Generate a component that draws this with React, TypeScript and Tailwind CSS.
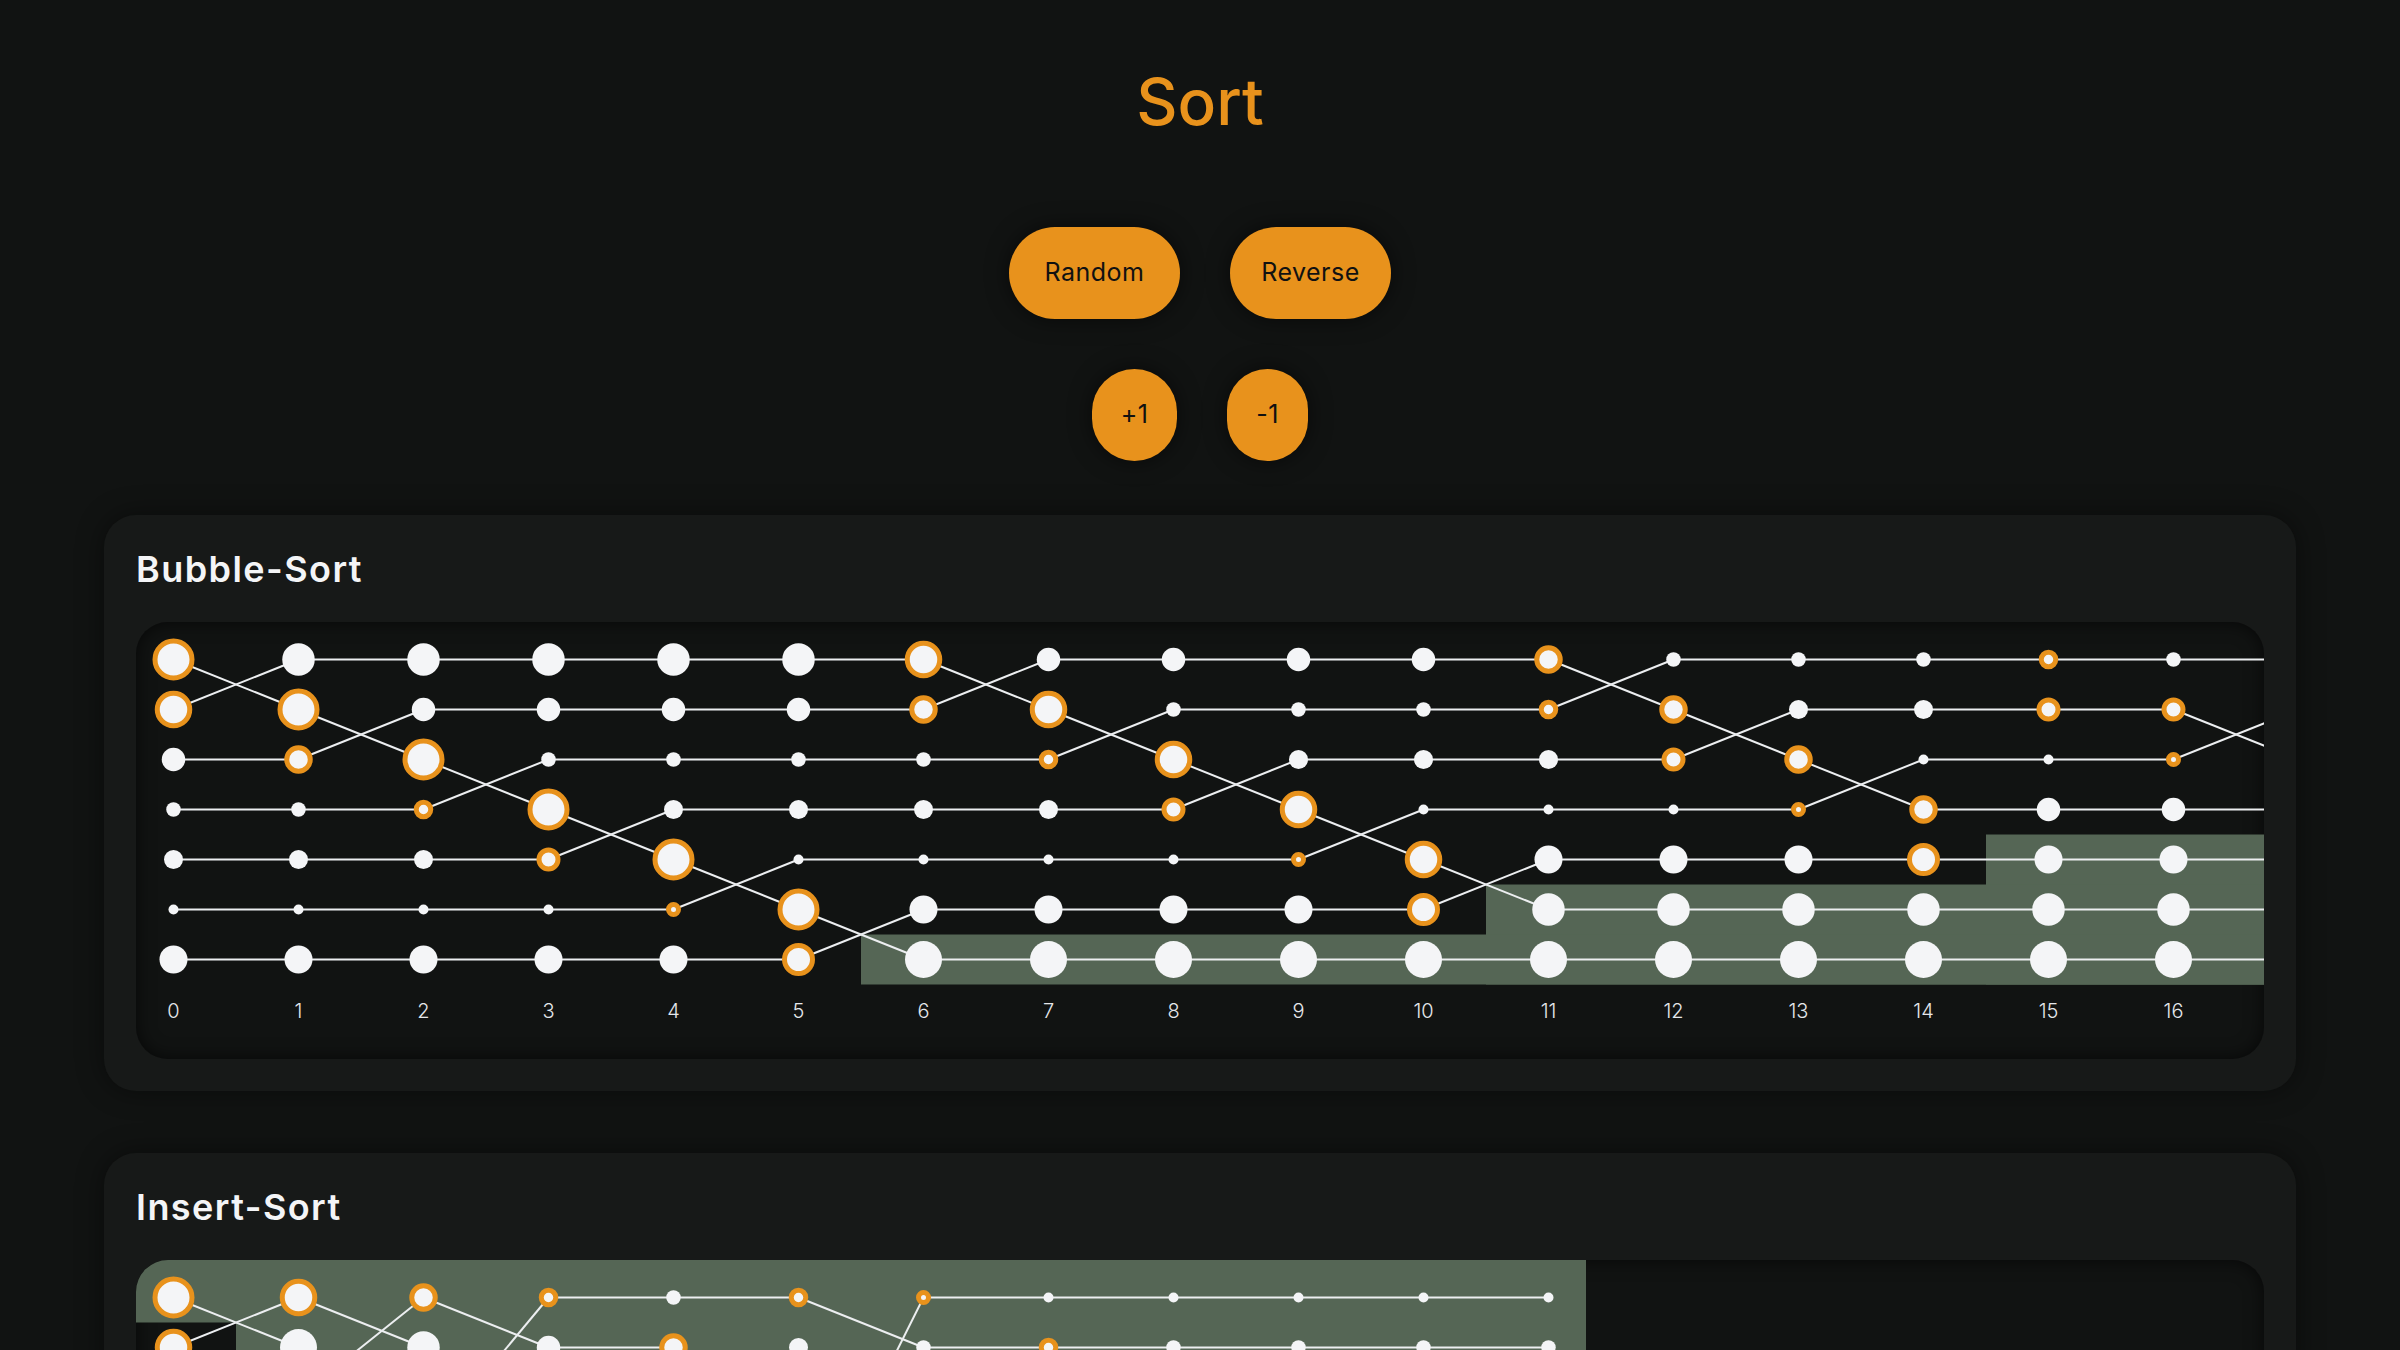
import React from "react";

type Step = { state: number[]; hl: number[] };
type Chart = { steps: Step[]; sortedFrom: number[]; mode: "suffix" | "prefix" };

const INITIAL = [7, 6, 4, 2, 3, 1, 5];
const COL = 125;
const ROW = 50;
const PAD = 37.5;
const H = 428;

function bubble(): Chart {
  const a = INITIAL.slice();
  const n = a.length;
  const steps: Step[] = [];
  const sortedFrom: number[] = new Array(n).fill(Infinity);
  for (let p = 0; p < n - 1; p++) {
    for (let j = 0; j < n - 1 - p; j++) {
      steps.push({ state: a.slice(), hl: [j, j + 1] });
      if (a[j] > a[j + 1]) {
        const t = a[j];
        a[j] = a[j + 1];
        a[j + 1] = t;
      }
    }
    sortedFrom[n - 1 - p] = steps.length - 0.5;
    if (p === n - 2) sortedFrom[0] = steps.length - 0.5;
  }
  steps.push({ state: a.slice(), hl: [] });
  return { steps, sortedFrom, mode: "suffix" };
}

function insertion(): Chart {
  const a = INITIAL.slice();
  const n = a.length;
  const steps: Step[] = [];
  const sortedFrom: number[] = new Array(n).fill(Infinity);
  sortedFrom[0] = -1;
  for (let i = 1; i < n; i++) {
    const key = a[i];
    let j = 0;
    while (j < i) {
      steps.push({ state: a.slice(), hl: [j, i] });
      if (key < a[j]) {
        a.splice(i, 1);
        a.splice(j, 0, key);
        break;
      }
      j++;
    }
    sortedFrom[i] = steps.length - 0.5;
  }
  steps.push({ state: a.slice(), hl: [] });
  return { steps, sortedFrom, mode: "prefix" };
}

const cx = (c: number) => PAD + COL * c;
const cy = (r: number) => PAD + ROW * r;
const rad = (v: number) => 2.25 * v + 2.75;

function SortChart({ chart }: { chart: Chart }) {
  const { steps, sortedFrom, mode } = chart;
  const n = INITIAL.length;
  const W = PAD * 2 + COL * (steps.length - 1);
  const bandTop = (r: number) => (r === 0 ? 0 : cy(r) - ROW / 2);
  const bandBottom = (r: number) => cy(r) + ROW / 2;
  const lines: React.ReactNode[] = [];
  for (let c = 0; c < steps.length - 1; c++) {
    const s = steps[c].state;
    const t = steps[c + 1].state;
    s.forEach((v, r) => {
      const r2 = t.indexOf(v);
      lines.push(
        <line
          key={`l${c}-${r}`}
          x1={cx(c)}
          y1={cy(r)}
          x2={cx(c + 1)}
          y2={cy(r2)}
          stroke="#eceef0"
          strokeWidth={2}
        />
      );
    });
  }
  return (
    <svg width={W} height={H} className="block shrink-0">
      {sortedFrom.map((f, r) => {
        if (f === Infinity) return null;
        const x = f < 0 ? 0 : cx(f);
        const y0 = mode === "suffix" ? bandTop(r) : 0;
        const y1 = mode === "suffix" ? bandBottom(n - 1) : bandBottom(r);
        return <rect key={`b${r}`} x={x} y={y0} width={W - x} height={y1 - y0} fill="#556655" />;
      })}
      {lines}
      {steps.map((st, c) =>
        st.state.map((v, r) => {
          const on = st.hl.includes(r);
          return (
            <circle
              key={`c${c}-${r}`}
              cx={cx(c)}
              cy={cy(r)}
              r={rad(v)}
              fill="#f4f5f7"
              stroke={on ? "#e8921c" : "none"}
              strokeWidth={on ? 5 : 0}
            />
          );
        })
      )}
      {steps.map((_, c) => (
        <text
          key={`t${c}`}
          x={cx(c)}
          y={cy(n) + 1.5}
          textAnchor="middle"
          dominantBaseline="central"
          fontFamily="Inter, sans-serif"
          fontWeight={300}
          fontSize={20}
          fill="#e5e7eb"
        >
          {c}
        </text>
      ))}
    </svg>
  );
}

function Card({ title, chart }: { title: string; chart: Chart }) {
  return (
    <section className="rounded-[32px] bg-[#171918] p-8 shadow-[0_0_28px_rgba(0,0,0,0.45)]">
      <h2 className="text-[36px] leading-[44px] font-semibold tracking-[0.04em] text-[#f4f5f7]">{title}</h2>
      <div className="mt-[31px] h-[437px] overflow-hidden rounded-[32px] bg-[#111312] shadow-[inset_0_0_18px_rgba(0,0,0,0.65)]">
        <div className="h-full overflow-x-auto overflow-y-hidden [&::-webkit-scrollbar]:h-[9px] [&::-webkit-scrollbar-track]:bg-transparent [&::-webkit-scrollbar-thumb]:bg-[#0a0b0a]">
          <SortChart chart={chart} />
        </div>
      </div>
    </section>
  );
}

function Btn({ label, w }: { label: string; w: string }) {
  return (
    <button
      className={`${w} h-[92px] rounded-full bg-[#e8921c] text-[25px] font-normal tracking-[0.02em] text-[#111111] shadow-[0_0_22px_rgba(0,0,0,0.55)]`}
    >
      {label}
    </button>
  );
}

export default function App() {
  const b = bubble();
  const ins = insertion();
  return (
    <div className="min-h-screen bg-[#111312] pt-[70px] pb-16 font-['Inter',sans-serif]">
      <h1 className="text-center text-[64px] leading-[64px] font-medium text-[#e8921c]">Sort</h1>
      <div className="mt-[93px] flex justify-center gap-[50px]">
        <Btn label="Random" w="w-[171px]" />
        <Btn label="Reverse" w="w-[161px]" />
      </div>
      <div className="mt-[50px] flex justify-center gap-[50px]">
        <Btn label="+1" w="w-[85px]" />
        <Btn label="-1" w="w-[81px]" />
      </div>
      <div className="mt-[54px] flex flex-col gap-[62px] px-[104px]">
        <Card title="Bubble-Sort" chart={b} />
        <Card title="Insert-Sort" chart={ins} />
      </div>
    </div>
  );
}
